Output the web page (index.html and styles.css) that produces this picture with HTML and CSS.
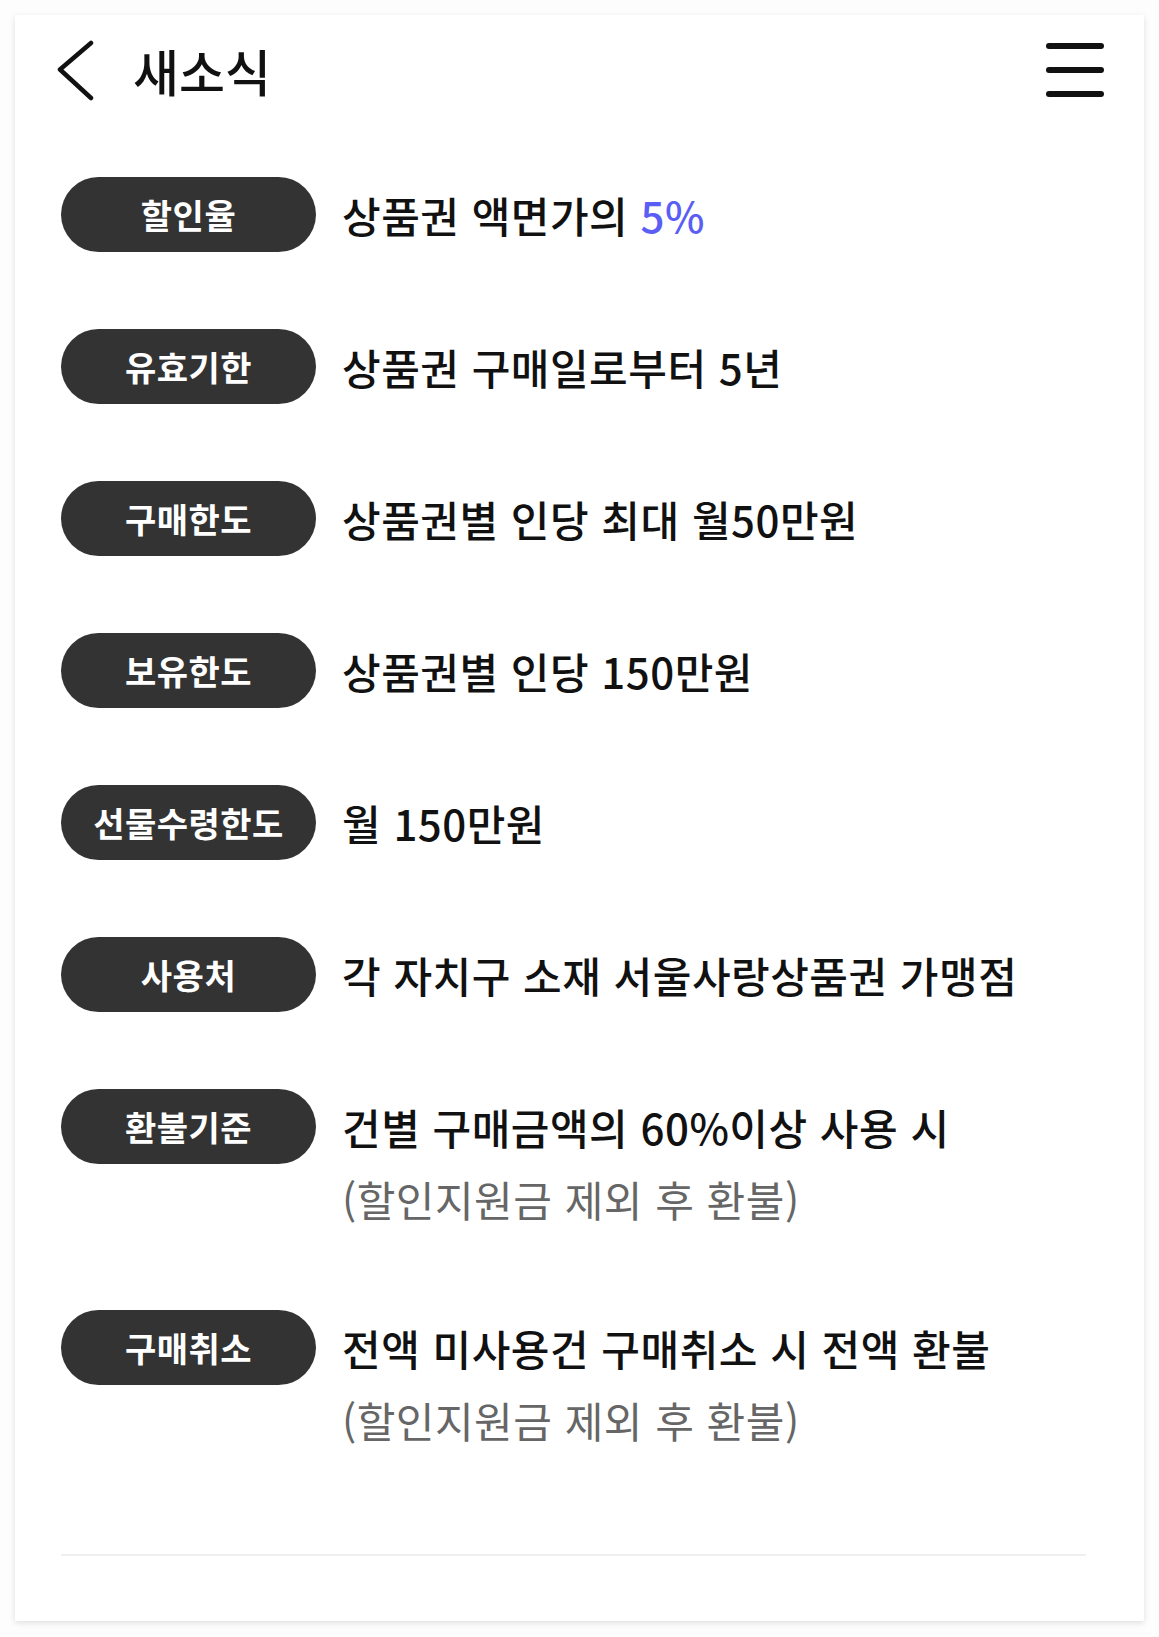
FILE: index.html
```html
<!DOCTYPE html>
<html lang="ko">
  <head>
    <meta charset="UTF-8" />
    <meta name="viewport" content="width=device-width, initial-scale=1.0" />
    <title>새소식</title>
    <link rel="stylesheet" href="styles.css">
  </head>
  <body>
    <div class="card">
      <header class="header">
        <a class="back" href="#">
          <svg width="38" height="63" viewBox="0 0 38 63">
            <path d="M34 4 L3 30.5 L34 59" fill="none" stroke="#111" stroke-width="4.5" stroke-linecap="round" stroke-linejoin="round" />
          </svg>
        </a>
        <h1 class="title">새소식</h1>
        <button class="menu" type="button">
          <svg width="58" height="54" viewBox="0 0 58 54">
            <g stroke="#111" stroke-width="6" stroke-linecap="round">
              <line x1="3" y1="3" x2="55" y2="3" />
              <line x1="3" y1="27" x2="55" y2="27" />
              <line x1="3" y1="51" x2="55" y2="51" />
            </g>
          </svg>
        </button>
      </header>

      <ul class="info-list">
        <li class="info-row">
          <span class="badge">할인율</span>
          <div class="info-text">
            <p class="main">상품권 액면가의 <span class="accent">5%</span></p>
          </div>
        </li>
        <li class="info-row">
          <span class="badge">유효기한</span>
          <div class="info-text">
            <p class="main">상품권 구매일로부터 5년</p>
          </div>
        </li>
        <li class="info-row">
          <span class="badge">구매한도</span>
          <div class="info-text">
            <p class="main">상품권별 인당 최대 월50만원</p>
          </div>
        </li>
        <li class="info-row">
          <span class="badge">보유한도</span>
          <div class="info-text">
            <p class="main">상품권별 인당 150만원</p>
          </div>
        </li>
        <li class="info-row">
          <span class="badge">선물수령한도</span>
          <div class="info-text">
            <p class="main">월 150만원</p>
          </div>
        </li>
        <li class="info-row">
          <span class="badge">사용처</span>
          <div class="info-text">
            <p class="main">각 자치구 소재 서울사랑상품권 가맹점</p>
          </div>
        </li>
        <li class="info-row">
          <span class="badge">환불기준</span>
          <div class="info-text">
            <p class="main">건별 구매금액의 60%이상 사용 시</p>
            <p class="sub">(할인지원금 제외 후 환불)</p>
          </div>
        </li>
        <li class="info-row">
          <span class="badge">구매취소</span>
          <div class="info-text">
            <p class="main">전액 미사용건 구매취소 시 전액 환불</p>
            <p class="sub">(할인지원금 제외 후 환불)</p>
          </div>
        </li>
      </ul>

      <hr class="divider" />
    </div>
  </body>
</html>
```

FILE: styles.css
```css
* {
  margin: 0;
  padding: 0;
  box-sizing: border-box;
  font-family: "Noto Sans CJK KR", "Noto Sans", sans-serif;
}

body {
  background: #fdfdfd;
  padding: 15px;
}

.card {
  width: 1129px;
  height: 1606px;
  background: white;
  box-shadow: 0 2px 6px rgba(0, 0, 0, 0.12);
}

.header {
  height: 110px;
  display: flex;
  align-items: center;
  padding: 0 40px 0 42px;
}

.back {
  display: flex;
}

.title {
  margin-left: 38px;
  color: #111;
  font-size: 50px;
  font-weight: 500;
  line-height: 1;
}

.menu {
  margin-left: auto;
  display: flex;
  background: none;
  border: none;
  cursor: pointer;
}

.info-list {
  list-style: none;
  margin-top: 52px;
  padding: 0 46px;
  display: flex;
  flex-direction: column;
  gap: 77px;
}

.info-row {
  display: flex;
  align-items: flex-start;
  gap: 26px;
}

.badge {
  flex-shrink: 0;
  width: 255px;
  height: 75px;
  border-radius: 38px;
  background: #333;
  color: white;
  font-size: 34px;
  font-weight: 700;
  letter-spacing: 0.5px;
  display: flex;
  justify-content: center;
  align-items: center;
}

.info-text .main {
  color: #111;
  font-size: 42px;
  font-weight: 500;
  letter-spacing: 0.5px;
  line-height: 75px;
}

.info-text .sub {
  color: #666;
  font-size: 42px;
  font-weight: 400;
  letter-spacing: 0.5px;
  line-height: 69px;
}

.accent {
  color: #5b5ef5;
}

.divider {
  margin: 100px 58px 0 46px;
  border: none;
  border-top: 2px solid #efefef;
}
```
